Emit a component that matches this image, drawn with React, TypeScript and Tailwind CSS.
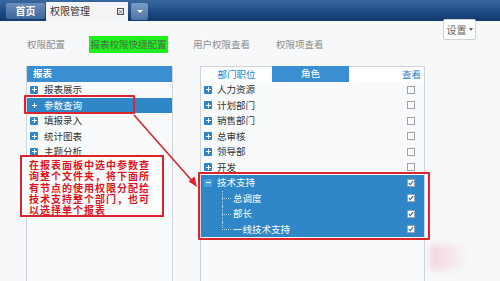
import React from "react";

const FONT = { fontFamily: '"Noto Sans CJK SC", "Noto Sans", sans-serif' } as React.CSSProperties;

function PlusIcon({ minus = false, flat = false }: { minus?: boolean; flat?: boolean }) {
  return (
    <span
      className={`relative inline-block w-[8px] h-[8px] rounded-[1px] shrink-0 ${flat ? "bg-[#2f87c8]" : minus ? "bg-[#4a9fdc]" : "bg-[#2b85cf]"}`}
    >
      <span className="absolute left-[1.5px] top-[3.5px] w-[5px] h-[1px] bg-white" />
      {!minus && <span className="absolute left-[3.5px] top-[1.5px] w-[1px] h-[5px] bg-white" />}
    </span>
  );
}

function Check({ checked = false }: { checked?: boolean }) {
  return (
    <span className="relative inline-block w-[8px] h-[8px] bg-white border border-[#9aa3ad] shrink-0">
      {checked && (
        <svg className="absolute left-0 top-0" width="6" height="6" viewBox="0 0 6 6">
          <path d="M0.8 3.2 L2.3 4.6 L5.2 1.2" stroke="#2a6fb5" strokeWidth="1.1" fill="none" />
        </svg>
      )}
    </span>
  );
}

function LeftRow({ label, selected = false }: { label: string; selected?: boolean }) {
  return (
    <div
      className={`h-[15.5px] flex items-center pl-[3px] gap-[6px] text-[9.5px] leading-none ${selected ? "bg-[#2f87c8] text-white" : "text-[#333]"}`}
    >
      <PlusIcon flat={selected} />
      <span>{label}</span>
    </div>
  );
}

function RightRow({ label, checked = false, selected = false, minus = false }: { label: string; checked?: boolean; selected?: boolean; minus?: boolean }) {
  return (
    <div className={`h-[15.5px] flex items-center pl-[3px] pr-[9px] text-[9.5px] leading-none ${selected ? "text-white" : "text-[#333]"}`}>
      <PlusIcon minus={minus} />
      <span className="ml-[5px] flex-1">{label}</span>
      <Check checked={checked} />
    </div>
  );
}

function ChildRow({ label, last = false }: { label: string; last?: boolean }) {
  return (
    <div className="h-[15.5px] flex items-center pr-[9px] text-[9.5px] leading-none text-white">
      <span className="relative w-[32px] h-full shrink-0">
        <span className={`absolute left-[21px] top-0 w-0 border-l border-dotted border-[#a9d2f0] ${last ? "h-[8px]" : "h-full"}`} />
        <span className="absolute left-[21px] top-[7.5px] w-[9px] h-0 border-t border-dotted border-[#a9d2f0]" />
      </span>
      <span className="flex-1">{label}</span>
      <Check checked />
    </div>
  );
}

export default function App() {
  return (
    <div className="relative w-[500px] h-[281px] overflow-hidden bg-[#f7f8fa] flex flex-col" style={FONT}>
      {/* top bar */}
      <div className="h-[21px] shrink-0 flex items-end pl-[6px] bg-gradient-to-b from-[#3a69a2] via-[#1f4d86] to-[#113a6e]">
        <div className="mb-[2px] w-[39px] h-[16px] flex items-center justify-center rounded-[2px] bg-gradient-to-b from-[#6a8fbd] to-[#3e6699] text-white text-[10px] font-bold leading-none">
          首页
        </div>
        <div className="ml-[1px] w-[82px] h-[19.5px] flex items-center pl-[4px] pr-[3px] bg-[#f3f4f5] text-[#333] text-[10px] leading-none">
          <span className="flex-1">权限管理</span>
          <span className="relative w-[7px] h-[7px] border border-[#555] mr-[1px]">
            <span className="absolute inset-0 flex items-center justify-center text-[7px] leading-none text-[#333]">×</span>
          </span>
        </div>
        <div className="ml-[3px] mb-[1px] w-[17px] h-[17px] flex items-center justify-center rounded-[2px] bg-gradient-to-b from-[#7c9cc4] to-[#4f75a6]">
          <span className="w-0 h-0 border-l-[3px] border-r-[3px] border-t-[3px] border-l-transparent border-r-transparent border-t-white" />
        </div>
      </div>

      {/* sub tabs */}
      <div className="h-[45px] shrink-0 flex items-start justify-between">
        <div className="mt-[15px] flex items-center text-[9.5px] leading-none text-[#8a8a8a]">
          <span className="ml-[27px]">权限配置</span>
          <span className="ml-[24px] w-[79px] h-[17px] flex items-center justify-center bg-[#1ef01e] text-[#4b6d4b]">报表权限快捷配置</span>
          <span className="ml-[25px]">用户权限查看</span>
          <span className="ml-[26px]">权限项查看</span>
        </div>
        <div className="mt-[-2px] mr-[24px] w-[33px] h-[21px] flex items-center justify-center gap-[2px] bg-white border border-[#cfd3d8] rounded-[2px] text-[10px] leading-none text-[#666]">
          <span>设置</span>
          <span className="w-0 h-0 border-l-[2.5px] border-r-[2.5px] border-t-[3px] border-l-transparent border-r-transparent border-t-[#666]" />
        </div>
      </div>

      {/* panels */}
      <div className="flex-1 flex pl-[26px] gap-[27px]">
        <div className="w-[147px] border-l border-r border-[#cdd4db] bg-[#f9fafb]">
          <div className="h-[16px] bg-[#3a8fd2] text-white text-[9.5px] font-bold leading-none flex items-center pl-[6px]">报表</div>
          <LeftRow label="报表展示" />
          <LeftRow label="参数查询" selected />
          <LeftRow label="填报录入" />
          <LeftRow label="统计图表" />
          <LeftRow label="主题分析" />
        </div>

        <div className="w-[225px] border-l border-r border-[#cdd4db] bg-[#f9fafb]">
          <div className="h-[16px] flex text-[9.5px] leading-none">
            <div className="w-[71px] flex items-center justify-center bg-white text-[#2a80c8] border-t border-[#cdd4db]">部门职位</div>
            <div className="w-[77px] flex items-center justify-center bg-[#3a8fd2] text-white">角色</div>
            <div className="flex-1 flex items-center justify-end pr-[3px] bg-white text-[#2a80c8] border-t border-[#cdd4db]">查看</div>
          </div>
          <RightRow label="人力资源" />
          <RightRow label="计划部门" />
          <RightRow label="销售部门" />
          <RightRow label="总审核" />
          <RightRow label="领导部" />
          <RightRow label="开发" />
          <div className="bg-[#2f87c8]">
            <RightRow label="技术支持" checked selected minus />
            <ChildRow label="总调度" />
            <ChildRow label="部长" />
            <ChildRow label="一线技术支持" last />
          </div>
        </div>
      </div>

      {/* annotations overlay */}
      <div className="absolute left-[24px] top-[95px] w-[111px] h-[19px] border-2 border-[#d9262e] rounded-[1px]" />
      <div className="absolute left-[198px] top-[172px] w-[232px] h-[68px] border-2 border-[#d9262e] rounded-[1px]" />
      <svg className="absolute left-0 top-0" width="500" height="281" viewBox="0 0 500 281">
        <line x1="134" y1="115" x2="193" y2="182" stroke="#d9262e" strokeWidth="1.6" />
        <path d="M197 187 L188.5 181.5 L194.5 176.5 Z" fill="#d9262e" />
      </svg>
      <div className="absolute left-[20px] top-[155px] w-[144px] h-[62px] bg-white border-2 border-[#d9262e] pl-[7px] pt-[2px] text-[#e0101c] text-[10px] font-bold tracking-[1px] leading-[11.3px]">
        <div>在报表面板中选中参数查</div>
        <div>询整个文件夹，将下面所</div>
        <div>有节点的使用权限分配给</div>
        <div>技术支持整个部门，也可</div>
        <div>以选择单个报表</div>
      </div>
      <div className="absolute left-[430px] top-[244px] w-[40px] h-[26px] bg-gradient-to-r from-[#f3c6cf] to-transparent opacity-70 blur-[3px]" />
    </div>
  );
}
